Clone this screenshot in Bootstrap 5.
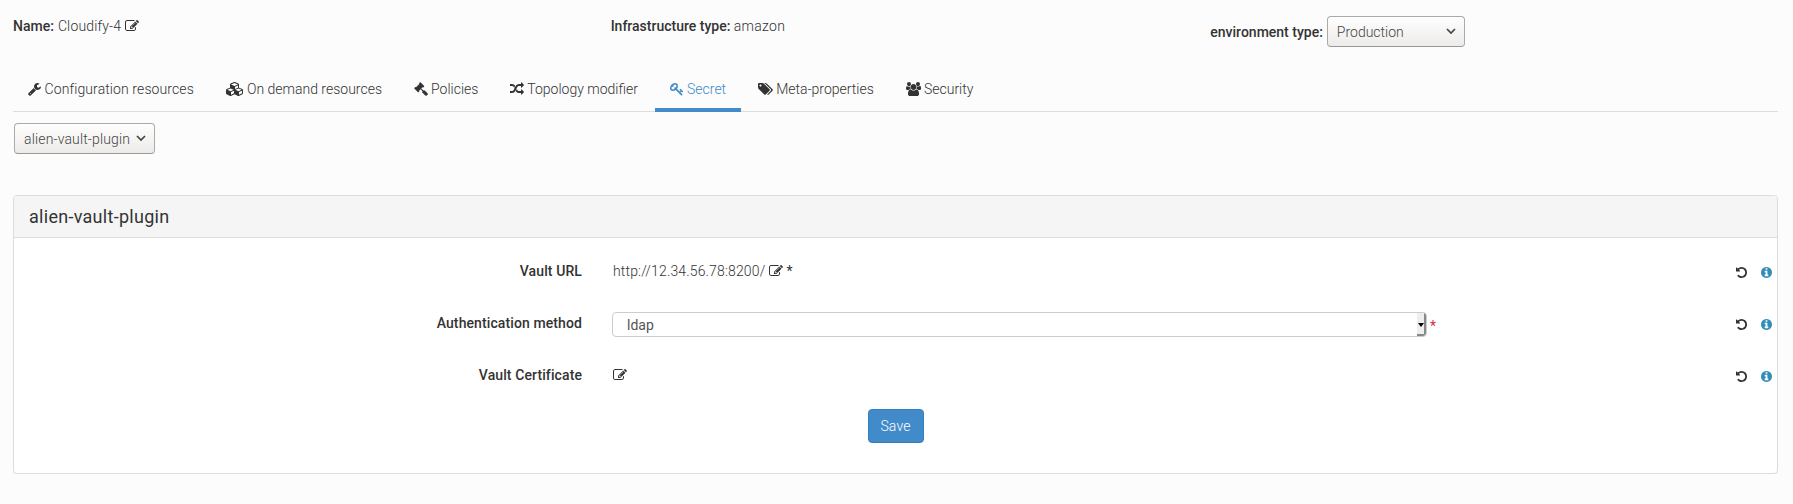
<!DOCTYPE html>
<html lang="en">
<head>
<meta charset="utf-8">
<title>Cloudify-4</title>
<link href="https://cdn.jsdelivr.net/npm/bootstrap@5.3.0/dist/css/bootstrap.min.css" rel="stylesheet">
<style>
body{font:300 14px/20px Roboto,sans-serif;color:#333;background:#fcfcfc;padding:0 15px 0 13px;overflow:hidden}
b,label{font-weight:500}
.ico{height:14px;width:14px;fill:currentColor;vertical-align:-2px;display:inline-block;overflow:visible}
.w13{width:13px}.w15{width:15px}.w18{width:18px}
.loose{letter-spacing:.15px}
.top-row{height:63px;margin-right:-15px;margin-left:-13px}
.top-row>div{padding-left:13px;padding-top:16px}
.top-row>div:last-child{padding-left:15px}
.sel{display:inline-flex;align-items:center;justify-content:space-between;height:31px;border:1px solid #aaa;border-bottom-color:#999;border-radius:4px;background:linear-gradient(#fefefe,#f6f5f4 50%,#edebea);padding:0 8px 0 9px;color:#444}
.sel svg{width:10px;height:7px;fill:none;stroke:#444;stroke-width:1.7}
.nav-tabs{height:49px;border-bottom:1px solid #ddd;gap:1.7px}
.nav-tabs .nav-link{border:0;border-radius:0;padding:16px 15px 9px;color:#333;height:49px;white-space:nowrap}
.nav-tabs .nav-link.loose{letter-spacing:.1px}
.nav-tabs .nav-link.active{color:#428bca;background:none;border-bottom:4px solid #428bca}
.panel{height:279px;border:1px solid #ddd;border-radius:4px;background:#fff;box-shadow:0 1px 1px rgba(0,0,0,.05);margin-top:41px}
.panel-head{height:42px;background:#f5f5f5;border-bottom:1px solid #ddd;padding:11px 15px;font-size:18px;font-weight:400;letter-spacing:.28px;border-radius:3px 3px 0 0}
.prop{height:52px}
.prop label{width:568px;text-align:right;padding-top:1px;letter-spacing:.1px}
.prop .val{margin-left:31px;padding-top:1px}
.tools{gap:14px;padding-right:5px;padding-top:7px}
.tools .ico{width:11px;height:11px}
.info{color:#318db5}
.auth{width:815px;height:25px;border:1px solid #ccc;border-radius:4px;font-weight:400;color:#555;padding-left:14px;margin-left:-1px;margin-top:-1px;line-height:24px;overflow:hidden}
.spin{width:9px;height:23px;background:#eee;border-right:2px solid #888;border-bottom:2px solid #888;border-radius:0 0 3px 0}
.star{color:#c33;margin-left:3px;padding-top:3px}
.btn-save{font:300 14px/20px Roboto,sans-serif;letter-spacing:.15px;width:56px;height:34px;padding:0;color:#fff;background:#428bca;border:1px solid #357ebd;border-radius:4px}
</style>
</head>
<body>
<svg width="0" height="0" class="d-none">
<symbol id="edit" viewBox="0 0 1792 1792"><path d="M888 1184l116-116-152-152-116 116v56h96v96h56zm440-720q-16-16-33 1l-350 350q-17 17-1 33t33-1l350-350q17-17 1-33zm80 594v190q0 119-84.500 203.500t-203.500 84.500h-832q-119 0-203.500-84.500t-84.500-203.500v-832q0-119 84.500-203.500t203.500-84.500h832q63 0 117 25 15 7 18 23 3 17-9 29l-49 49q-14 14-32 8-23-6-45-6h-832q-66 0-113 47t-47 113v832q0 66 47 113t113 47h832q66 0 113-47t47-113v-126q0-13 9-22l64-64q15-15 35-7t20 29zm-96-738l288 288-672 672h-288v-288zm444 132l-92 92-288-288 92-92q28-28 68-28t68 28l152 152q28 28 28 68t-28 68z"/></symbol>
<symbol id="undo" viewBox="128 128 1536 1536"><path d="M1664 896q0 156-61 298t-164 245-245 164-298 61q-172 0-327-72.500t-264-204.500q-7-10-6.500-22.500t8.500-20.500l137-138q10-9 25-9 16 2 23 12 73 95 179 147t225 52q104 0 198.500-40.500t163.500-109.500 109.500-163.500 40.500-198.500-40.500-198.500-109.500-163.500-163.500-109.500-198.500-40.500q-98 0-188 35.500t-160 101.500l137 138q31 30 14 69-17 40-59 40h-448q-26 0-45-19t-19-45v-448q0-42 40-59 39-17 69 14l130 129q107-101 244.500-156.500t284.500-55.500q156 0 298 61t245 164 164 245 61 298z"/></symbol>
<symbol id="info" viewBox="128 128 1536 1536"><path d="M1152 1376v-160q0-14-9-23t-23-9h-96v-512q0-14-9-23t-23-9h-320q-14 0-23 9t-9 23v160q0 14 9 23t23 9h96v320h-96q-14 0-23 9t-9 23v160q0 14 9 23t23 9h448q14 0 23-9t9-23zm-128-896v-160q0-14-9-23t-23-9h-192q-14 0-23 9t-9 23v160q0 14 9 23t23 9h192q14 0 23-9t9-23zm640 416q0 209-103 385.500t-279.500 279.500-385.500 103-385.500-103-279.500-279.500-103-385.500 103-385.500 279.500-279.500 385.500-103 385.500 103 279.500 279.500 103 385.500z"/></symbol>
</svg>

<div class="top-row row g-0">
  <div class="col-4"><b class="me-1">Name:</b><span class="loose">Cloudify-4</span> <svg class="ico" ><use href="#edit"/></svg></div>
  <div class="col-4"><b>Infrastructure type:</b> <span style="letter-spacing:.3px">amazon</span></div>
  <div class="col-4 d-flex align-items-start"><b class="me-1 d-flex align-items-center" style="padding-top:6px">environment type:</b><span class="sel" style="width:138px">Production<svg viewBox="0 0 10 7"><path d="M1 1l4 4 4-4"/></svg></span></div>
</div>

<ul class="nav nav-tabs">
  <li class="nav-item"><a class="nav-link loose"><svg class="ico w13" viewBox="64 0 1664 1792"><path d="M448 1472q0-26-19-45t-45-19-45 19-19 45 19 45 45 19 45-19 19-45zm644-420l-682 682q-37 37-90 37-52 0-91-37l-106-108q-38-36-38-90 0-53 38-91l681-681q39 98 114.500 173.500t173.500 114.500zm634-435q0 39-23 106-47 134-164.500 217.500t-258.500 83.500q-185 0-316.500-131.500t-131.500-316.500 131.500-316.500 316.500-131.500q58 0 121.500 16.500t107.500 46.500q16 11 16 28t-16 28l-293 169v224l193 107q5-3 79-48.500t135.500-81 70.500-35.500q15 0 23.500 10t8.500 25z"/></svg> Configuration resources</a></li>
  <li class="nav-item"><a class="nav-link"><svg class="ico w18" viewBox="0 0 2304 1792"><path d="M640 1632l384-192v-314l-384 164v342zm-64-454l404-173-404-173-404 173zm1088 454l384-192v-314l-384 164v342zm-64-454l404-173-404-173-404 173zm-448-293l384-165v-266l-384 164v267zm-64-379l441-189-441-189-441 189zm1088 518v416q0 36-19 67t-52 47l-448 224q-25 14-57 14t-57-14l-448-224q-5-2-7-4-2 2-7 4l-448 224q-25 14-57 14t-57-14l-448-224q-33-16-52-47t-19-67v-416q0-38 21.500-70t56.500-48l434-186v-400q0-38 21.500-70t56.500-48l448-192q23-10 50-10t50 10l448 192q35 16 56.500 48t21.500 70v400l434 186q36 16 57 48t21 70z"/></svg> On demand resources</a></li>
  <li class="nav-item"><a class="nav-link"><svg class="ico" viewBox="0 0 1792 1792"><path d="M1771 1536q0 53-37 90l-107 108q-39 37-91 37-53 0-90-37l-363-364q-38-36-38-90 0-53 43-96l-256-256-126 126q-14 14-34 14t-34-14q2 2 12.500 12t12.500 13 10 11.500 10 13.500 6 13.500 5.500 16.500 1.500 18q0 38-28 68-3 3-16.500 18t-19 20.500-18.500 16.500-22 15.500-22 9-26 4.500q-40 0-68-28l-408-408q-28-28-28-68 0-13 4.500-26t9-22 15.500-22 16.500-18.500 20.500-19 18-16.500q30-28 68-28 10 0 18 1.500t16.500 5.500 13.500 6 13.500 10 11.500 10 13 12.500 12 12.500q-14-14-14-34t14-34l348-348q14-14 34-14t34 14q-2-2-12.500-12t-12.500-13-10-11.500-10-13.500-6-13.500-5.500-16.500-1.500-18q0-38 28-68 3-3 16.500-18t19-20.500 18.500-16.500 22-15.500 22-9 26-4.500q40 0 68 28l408 408q28 28 28 68 0 13-4.500 26t-9 22-15.500 22-16.500 18.500-20.500 19-18 16.500q-30 28-68 28-10 0-18-1.500t-16.500-5.500-13.500-6-13.500-10-11.500-10-13-12.500-12-12.500q14 14 14 34t-14 34l-126 126 256 256q43-43 96-43 52 0 91 37l363 363q37 39 37 91z"/></svg> Policies</a></li>
  <li class="nav-item"><a class="nav-link"><svg class="ico" viewBox="0 0 1792 1792"><path d="M666 481q-60 92-137 273-22-45-37-72.500t-40.500-63.500-51-56.500-63-35-81.500-14.500h-224q-14 0-23-9t-9-23v-192q0-14 9-23t23-9h224q250 0 410 225zm1126 799q0 14-9 23l-320 320q-9 9-23 9-13 0-22.500-9.500t-9.500-22.500v-192q-32 0-85 .5t-81 1-73-1-71-5-64-10.500-63-18.500-58-28.500-59-40-55-53.500-56-69.500q59-93 136-273 22 45 37 72.500t40.500 63.500 51 56.500 63 35 81.500 14.500h256v-192q0-14 9-23t23-9q12 0 24 10l319 319q9 9 9 23zm0-896q0 14-9 23l-320 320q-9 9-23 9-13 0-22.500-9.500t-9.500-22.500v-192h-256q-48 0-87 15t-69 45-51 61.500-45 77.500q-32 62-78 171-29 66-49.500 111t-54 105-64 100-74 83-90 68.500-106.500 42-128 16.500h-224q-14 0-23-9t-9-23v-192q0-14 9-23t23-9h224q48 0 87-15t69-45 51-61.500 45-77.500q32-62 78-171 29-66 49.500-111t54-105 64-100 74-83 90-68.500 106.500-42 128-16.500h256v-192q0-14 9-23t23-9q12 0 24 10l319 319q9 9 9 23z"/></svg> Topology modifier</a></li>
  <li class="nav-item"><a class="nav-link active"><svg class="ico" viewBox="0 0 1792 1792"><path d="M832 512q0-80-56-136t-136-56-136 56-56 136q0 42 19 83-41-19-83-19-80 0-136 56t-56 136 56 136 136 56 136-56 56-136q0-42-19-83 41 19 83 19 80 0 136-56t56-136zm851 704q0 17-49 66t-66 49q-9 0-28.500-16t-36.500-33-38.500-40-24.500-26l-96 96 220 220q28 28 28 68 0 42-39 81t-81 39q-40 0-68-28l-671-671q-176 131-365 131-163 0-265.500-102.500t-102.500-265.500q0-160 95-313t248-248 313-95q163 0 265.500 102.500t102.500 265.500q0 189-131 365l355 355 96-96q-3-3-26-24.500t-40-38.500-33-36.500-16-28.500q0-17 49-66t66-49q13 0 23 10 6 6 46 44.500t82 79.500 86.500 86 73 78 28.500 41z"/></svg> Secret</a></li>
  <li class="nav-item"><a class="nav-link"><svg class="ico w15" viewBox="0 0 1920 1792"><path d="M448 448q0-53-37.500-90.500t-90.500-37.500-90.500 37.500-37.500 90.500 37.500 90.500 90.500 37.500 90.500-37.500 37.500-90.500zm1067 576q0 53-37 90l-491 492q-39 37-91 37-53 0-90-37l-715-716q-38-37-64.500-101t-26.500-117v-416q0-52 38-90t90-38h416q53 0 117 26.500t102 64.500l715 714q37 39 37 91zm384 0q0 53-37 90l-491 492q-39 37-91 37-36 0-59-14t-53-45l470-470q37-37 37-90 0-52-37-91l-715-714q-38-38-102-64.500t-117-26.500h224q53 0 117 26.500t102 64.500l715 714q37 39 37 91z"/></svg> Meta-properties</a></li>
  <li class="nav-item"><a class="nav-link"><svg class="ico w15" viewBox="0 0 1920 1792"><path d="M593 896q-162 5-265 128h-134q-82 0-138-40.500t-56-118.500q0-353 124-353 6 0 43.500 21t97.500 42.500 119 21.500q67 0 133-23-5 37-5 66 0 159 93 290zm1071 637q0 120-73 189.500t-194 69.500h-874q-121 0-194-69.500t-73-189.500q0-53 3.500-103.500t14-109 26.500-108.500 43-97.500 62-81 85.500-53.500 111.500-20q10 0 43 21.500t73 48 107 48 135 21.500 135-21.500 107-48 73-48 43-21.500q61 0 111.500 20t85.500 53.500 62 81 43 97.500 26.500 108.500 14 109 3.500 103.500zm-1024-1277q0 106-75 181t-181 75-181-75-75-181 75-181 181-75 181 75 75 181zm704 384q0 159-112.500 271.500t-271.500 112.500-271.500-112.500-112.500-271.500 112.500-271.500 271.500-112.500 271.500 112.500 112.500 271.500zm576 225q0 78-56 118.500t-138 40.500h-134q-103-123-265-128 93-131 93-290 0-29-5-66 66 23 133 23 59 0 119-21.500t97.500-42.500 43.500-21q124 0 124 353zm-128-609q0 106-75 181t-181 75-181-75-75-181 75-181 181-75 181 75 75 181z"/></svg> Security</a></li>
</ul>

<div class="d-flex" style="margin:11px 0 0 1px"><span class="sel loose" style="width:141px">alien-vault-plugin<svg viewBox="0 0 10 7"><path d="M1 1l4 4 4-4"/></svg></span></div>

<div class="panel">
  <div class="panel-head">alien-vault-plugin</div>
  <div style="padding-top:22px">
    <div class="prop d-flex align-items-start"><label>Vault URL</label><div class="val loose">http://12.34.56.78:8200/ <svg class="ico"><use href="#edit"/></svg> <span class="fw-normal">*</span></div><div class="tools d-flex ms-auto"><svg class="ico"><use href="#undo"/></svg><svg class="ico info"><use href="#info"/></svg></div></div>
    <div class="prop d-flex align-items-start"><label>Authentication method</label><div class="val d-flex"><div class="auth d-flex justify-content-between">ldap<span class="spin"><svg class="d-block" style="margin-top:9px" width="8" height="5"><path d="M1 1h6l-3 4z"/></svg></span></div><span class="star fw-normal">*</span></div><div class="tools d-flex ms-auto"><svg class="ico"><use href="#undo"/></svg><svg class="ico info"><use href="#info"/></svg></div></div>
    <div class="prop d-flex align-items-start"><label>Vault Certificate</label><div class="val"><svg class="ico"><use href="#edit"/></svg></div><div class="tools d-flex ms-auto"><svg class="ico"><use href="#undo"/></svg><svg class="ico info"><use href="#info"/></svg></div></div>
  </div>
  <div class="text-center" style="margin-top:-7px"><button class="btn btn-save">Save</button></div>
</div>
<script src="https://cdn.jsdelivr.net/npm/bootstrap@5.3.0/dist/js/bootstrap.bundle.min.js"></script>
</body>
</html>
